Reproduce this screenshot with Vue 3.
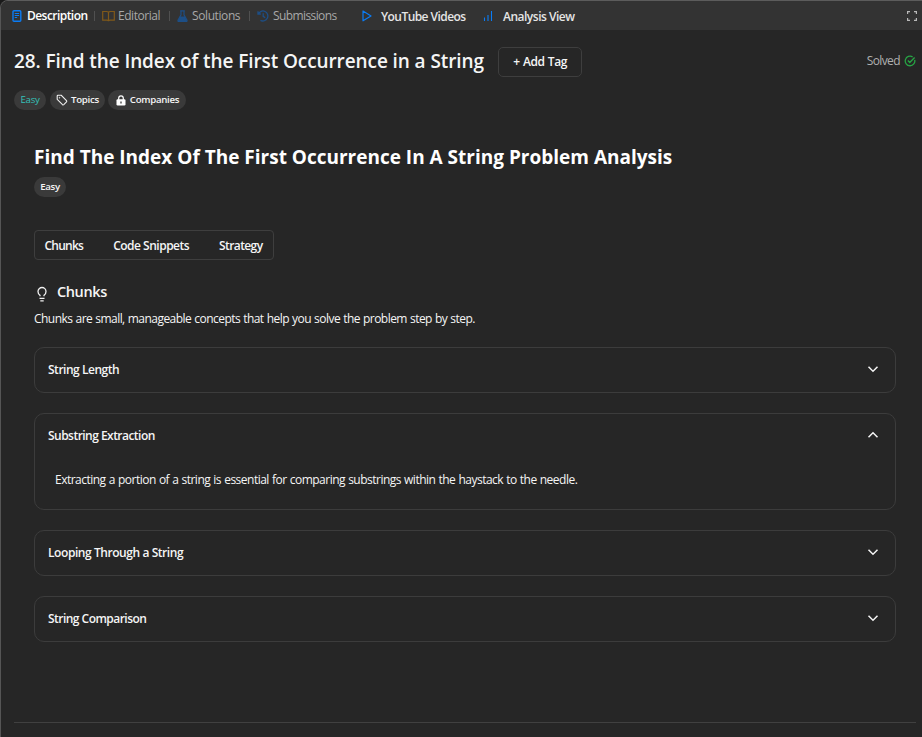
<script setup>
import { ref } from 'vue'

const sections = ref([
  { title: 'String Length', cls: 's-length', open: false },
  {
    title: 'Substring Extraction',
    cls: 's-extract',
    open: true,
    body: 'Extracting a portion of a string is essential for comparing substrings within the haystack to the needle.'
  },
  { title: 'Looping Through a String', cls: 's-loop', open: false },
  { title: 'String Comparison', cls: 's-compare', open: false }
])
</script>

<template>
  <div class="panel">
    <nav class="tabbar">
      <div class="tab active t-desc">
        <svg class="ic" width="10" height="12" viewBox="0 0 10 12" fill="none" stroke="#0a7cf5">
          <rect x="1" y=".7" width="7.8" height="10.600" rx="1" stroke-width="1.400" />
          <path d="M2.700 3.500h4.500M2.700 5.500h4.500M2.700 7.500h2.500" stroke-width="1" />
        </svg>
        <span>Description</span>
      </div>
      <i class="sep"></i>
      <div class="tab t-edit">
        <svg class="ic" width="13" height="12" viewBox="0 0 13 12" fill="none" stroke="#80591a" stroke-width="1.200">
          <path d="M.7 1.500h4q1.800 0 1.800 1Q6.500 1.500 8.300 1.500h4v8.700h-4.300q-1.500 0-1.500 1.100q0-1.100-1.500-1.100H.7zM6.500 2.500v8.500" />
        </svg>
        <span>Editorial</span>
      </div>
      <i class="sep"></i>
      <div class="tab t-sol">
        <svg class="ic" width="11" height="12" viewBox="0 0 11 12">
          <path d="M3.200.8h4.600M4 .8v4L1 10.300q-.3 1 .7 1h7.600q1 0 .7-1L7 4.800v-4" fill="none" stroke="#1d4f87" stroke-width="1.200" />
          <path d="M3 6.500h5l2 4.500H1z" fill="#1d4f87" />
        </svg>
        <span>Solutions</span>
      </div>
      <i class="sep"></i>
      <div class="tab t-sub">
        <svg class="ic" width="12" height="12" viewBox="0 0 12 12" fill="none" stroke="#1d4f87" stroke-width="1.300">
          <path d="M1 1.200v2.800h2.800M1.300 3.900A5 5 0 1 1 3.500 10.400M6.200 3.300v3l2 1.500" />
        </svg>
        <span>Submissions</span>
      </div>
      <div class="tab extra t-you">
        <svg class="ic" width="10" height="12" viewBox="0 0 10 12" fill="none" stroke="#0a7cf5" stroke-width="1.200">
          <path d="M1 1v9.800L9 5.900z" stroke-linejoin="round" />
        </svg>
        <span>YouTube Videos</span>
      </div>
      <div class="tab extra t-ana">
        <svg class="ic" width="10" height="12" viewBox="0 0 10 12" stroke="#0a7cf5" stroke-width="1.100">
          <path d="M1.500 7.500V11M5 5v6M8.500 1v10" />
        </svg>
        <span>Analysis View</span>
      </div>
      <svg class="full" width="10" height="10" viewBox="0 0 10 10" fill="none" stroke="#b9b9b9" stroke-width="1.200">
        <path d="M.6 3V.6H3M7 .6h2.400V3M9.400 7v2.400H7M3 9.400H.6V7" />
      </svg>
    </nav>

    <main class="content">
      <header class="head">
        <h1><span>28. Find the Index of the First Occurrence in a String</span></h1>
        <button class="add"><span>+ Add Tag</span></button>
        <div class="solved">
          <span>Solved</span>
          <svg width="12" height="12" viewBox="0 0 12 12" fill="none" stroke="#27a344" stroke-width="1.300">
            <path d="M10.700 4.800A4.800 4.800 0 1 1 8.600 1.900M3.800 5.500l2 2L10.600 2.500" />
          </svg>
        </div>
      </header>

      <div class="pills">
        <span class="pill easy"><span>Easy</span></span>
        <span class="pill topics">
          <svg width="12" height="12" viewBox="0 0 12 12" fill="none" stroke="#f0f0f0" stroke-width="1.100">
            <path d="M1.200 2v3.300l5.300 5.400q.7.500 1.300 0l2.700-2.800q.6-.6 0-1.300L5.300 1.300H2q-.8 0-.8.700z" />
            <circle cx="3.500" cy="3.700" r=".5" fill="#f0f0f0" stroke-width=".4" />
          </svg>
          <span>Topics</span>
        </span>
        <span class="pill comp">
          <svg width="10" height="11" viewBox="0 0 10 11">
            <path d="M2.700 5V3.200a2.300 2.300 0 0 1 4.600 0V5" fill="none" stroke="#fff" stroke-width="1.200" />
            <rect x=".5" y="4.300" width="9" height="6.200" rx="1.200" fill="#fff" />
            <path d="M5 6.400v2" stroke="#3a3a3a" stroke-width="1.300" />
          </svg>
          <span>Companies</span>
        </span>
      </div>

      <section class="analysis">
        <h2><span>Find The Index Of The First Occurrence In A String Problem Analysis</span></h2>
        <span class="pill level"><span>Easy</span></span>

        <div class="switch">
          <span class="w-chunks">Chunks</span>
          <span class="w-code">Code Snippets</span>
          <span class="w-strat">Strategy</span>
        </div>

        <h3>
          <svg width="12" height="16" viewBox="0 0 12 16" fill="none" stroke="#f0f0f0" stroke-width="1.300">
            <path d="M4 10.300V9.300Q2 8 2 5.500a4 4 0 0 1 8 0Q10 8 8 9.300v1" />
            <path d="M3.500 12.300h5M4.300 14.900h3.400" />
          </svg>
          <span>Chunks</span>
        </h3>
        <p class="intro"><span>Chunks are small, manageable concepts that help you solve the problem step by step.</span></p>

        <div class="cards">
          <article v-for="s in sections" :key="s.title" class="card">
            <div class="card-head" @click="s.open = !s.open">
              <span :class="s.cls">{{ s.title }}</span>
              <svg width="12" height="8" viewBox="0 0 12 8" fill="none" stroke="#f5f5f5" stroke-width="1.500">
                <path :d="s.open ? 'M1.500 6.200L6 1.800l4.500 4.400' : 'M1.500 1.800L6 6.200l4.500-4.400'" />
              </svg>
            </div>
            <p v-if="s.open && s.body" class="card-body"><span>{{ s.body }}</span></p>
          </article>
        </div>
      </section>
      <div class="rule"></div>
    </main>
  </div>
</template>

<style>
body { background: #1a1a1a; }
</style>

<style scoped>
* { box-sizing: border-box; }
h1, h2, h3, p { margin: 0; }
svg { display: block; flex: none; }
.panel {
  height: 737px;
  display: flex;
  flex-direction: column;
  background: #262626;
  border-top: 1px solid #5c5c5c;
  border-left: 1px solid #555;
  border-top-left-radius: 8px;
  overflow: hidden;
  color: #f5f5f5;
  font-family: "Open Sans", "Noto Sans", sans-serif;
  white-space: nowrap;
}
.tabbar {
  height: 29px;
  flex: none;
  display: flex;
  align-items: center;
  background: #333;
  padding-left: 11px;
  font-size: 12px;
  line-height: 18px;
  color: #a8a8a8;
}
.tab { display: flex; align-items: center; flex: none; }
.active { color: #fff; font-weight: 600; }
.t-desc { width: 82px; gap: 5px; letter-spacing: -0.55px; }
.t-edit { width: 68px; gap: 3px; letter-spacing: -0.45px; padding-left: 1px; }
.t-sol { width: 73px; gap: 4px; letter-spacing: -0.4px; padding-left: 1px; }
.t-sub { width: 104px; gap: 4px; letter-spacing: -0.6px; padding-left: 1px; }
.extra { color: #e5e5e5; font-weight: 600; }
.extra span { position: relative; top: 1px; }
.t-you { width: 122px; gap: 9px; letter-spacing: -0.55px; padding-left: 2px; }
.t-ana { gap: 10px; letter-spacing: -0.5px; padding-left: 1px; }
.sep { width: 1px; height: 10px; background: #505050; margin-right: 6px; flex: none; }
.full { margin-left: auto; margin-right: 5px; }

.content { padding: 17px 6px 0 13px; flex: 1; }
.head { display: flex; align-items: center; height: 30px; }
h1 { width: 484px; font-size: 19px; line-height: 28px; font-weight: 600; letter-spacing: -0.09px; margin-top: -2px; }
.add {
  width: 84px;
  height: 30px;
  padding: 0;
  border: 1px solid #3e3e3e;
  border-radius: 5px;
  background: transparent;
  color: #f5f5f5;
  font: 600 12px/18px "Open Sans", sans-serif;
  letter-spacing: -0.45px;
  word-spacing: 0.7px;
}
.solved { margin-left: auto; display: flex; align-items: center; gap: 4px; margin-top: -3px; font-size: 12px; letter-spacing: -0.6px; color: #b0b0b0; }
.pills { display: flex; gap: 4px; margin-top: 13px; }
.pill {
  display: flex;
  align-items: center;
  justify-content: center;
  height: 20px;
  border-radius: 10px;
  background: #3a3a3a;
  font-size: 9.700px;
  line-height: 14px;
  font-weight: 600;
  letter-spacing: -0.3px;
}
.easy { width: 32px; color: #35c0b8; font-weight: 500; }
.topics { width: 55px; gap: 3px; }
.comp { width: 78px; gap: 4px; margin-left: -1px; padding-left: 1px; }
.analysis { padding: 35px 20px 0 20px; }
h2 { font-size: 19px; line-height: 24px; font-weight: 700; color: #fff; }
.level { width: 32px; margin-top: 8px; }
.switch {
  width: 240px;
  height: 30px;
  margin-top: 33px;
  padding: 0 10px;
  display: flex;
  align-items: center;
  justify-content: space-between;
  border: 1px solid #3e3e3e;
  border-radius: 4px;
  font-size: 12px;
  font-weight: 600;
  letter-spacing: -0.5px;
}
.switch span { position: relative; left: -0.5px; }
.w-chunks { letter-spacing: -0.75px; }
.w-strat { letter-spacing: -0.6px; }
h3 { display: flex; align-items: center; gap: 9px; margin-top: 19px; padding-left: 2px; height: 24px; font-size: 14.500px; font-weight: 600; letter-spacing: -0.4px; }
h3 svg { position: relative; top: 3px; }
.intro { margin-top: 7px; font-size: 12px; line-height: 18px; letter-spacing: -0.54px; word-spacing: 0.5px; }
.cards { display: flex; flex-direction: column; gap: 20px; margin-top: 19px; width: 862px; }
.card { border: 1px solid #3c3c3c; border-radius: 10px; }
.card-head { display: flex; align-items: center; justify-content: space-between; height: 44px; padding: 0 16px 0 13px; font-size: 12px; line-height: 18px; font-weight: 600; letter-spacing: -0.48px; }
.s-extract { letter-spacing: -0.53px; }
.s-loop { letter-spacing: -0.43px; }
.s-compare { letter-spacing: -0.53px; }
.card-head svg { margin-top: -2px; }
.card-body { height: 51px; padding: 13px 20px 0; font-size: 12px; line-height: 18px; letter-spacing: -0.51px; word-spacing: 0.5px; }
.rule { height: 1px; margin-top: 80px; background: #404040; }
</style>
